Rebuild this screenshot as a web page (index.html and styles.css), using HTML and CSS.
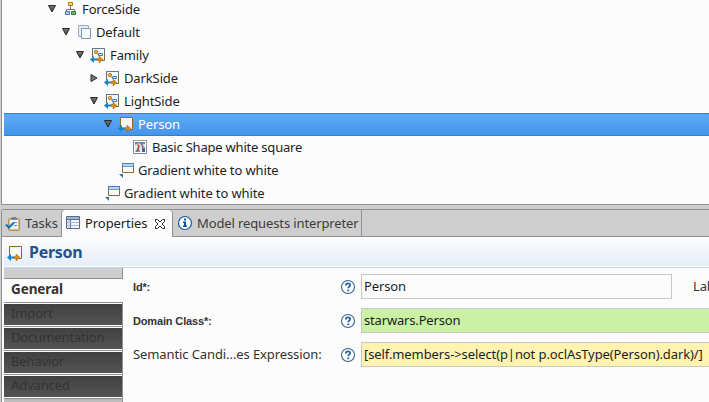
FILE: index.html
```html
<!DOCTYPE html>
<html lang="en">
<head>
<meta charset="utf-8">
<title>Properties</title>
<link rel="stylesheet" href="styles.css">
</head>
<body>
<svg class="defs" width="0" height="0">
  <defs>
    <linearGradient id="tri" x1="0" y1="0" x2="0" y2="1"><stop offset="0" stop-color="#777"/><stop offset="1" stop-color="#444"/></linearGradient>
    <symbol id="down" viewBox="0 0 12 12"><path d="M2.500 2.500h7L6 9z" fill="url(#tri)" stroke="#2b2b2b"/></symbol>
    <symbol id="right" viewBox="0 0 12 12"><path d="M3 2.500v7L9 6z" fill="#777" stroke="#2b2b2b"/></symbol>
    <symbol id="arrows" viewBox="0 0 16 16"><path d="M0 12.500l4-3.500v2.500h3v2H4V16z" fill="#1583c8"/><path d="M13 12.500L9 9v2.500H7v2h2V16z" fill="#d98a1c" stroke="#98600f" stroke-width=".5"/></symbol>
    <symbol id="container" viewBox="0 0 16 16"><path d="M2.500 10V1.500h12v12H12" fill="#f3f8fd" stroke="#846721"/><path d="M2.500 7V1.500h12v5" fill="none" stroke="#64748c"/><circle cx="6" cy="5" r="1.700" fill="#f2ac38" stroke="#b96b13" stroke-width=".8"/><path d="M7 6.500l2 2" stroke="#b96b13"/><path d="M8.500 6.500h4v2h-4z" fill="#e3f1ff" stroke="#3980bd"/><use href="#arrows"/></symbol>
    <symbol id="node" viewBox="0 0 16 16"><path d="M2.500 11V1.500h12v12H12" fill="#f3f6fa" stroke="#8a6b24"/><use href="#arrows"/></symbol>
    <symbol id="gradient" viewBox="0 0 16 16"><path d="M4.500 1.500h11v9h-11z" fill="#f8fbff" stroke="#8a6b24"/><path d="M4.500 6V1.500h11V6" fill="none" stroke="#4d79ad"/><path d="M5 2h10v2H5z" fill="#b8d5ef"/><path d="M5 4.500h10" stroke="#7099c8"/><path d="M1 12h4v4z" fill="#1b78b0"/></symbol>
    <symbol id="help" viewBox="0 0 16 16"><circle cx="8" cy="8" r="6.500" fill="#fff" stroke="#326594" stroke-width="1.100"/><path d="M5.900 6.600c0-3 4.300-2.800 4.300-.5 0 1.500-2 1.500-2 3.200" fill="none" stroke="#285f9a" stroke-width="1.800"/><path d="M7.300 10.500h1.900v1.700H7.300z" fill="#285f9a"/></symbol>
  </defs>
</svg>
<div class="workbench">
  <section class="tree">
    <div class="row d0"><svg class="twist"><use href="#down"/></svg><svg class="icon" viewBox="0 0 16 16"><path d="M8.500 5v4M4.500 11V8.500h8V11" fill="none" stroke="#71777b"/><path d="M6.500 1.500h4v3h-4z" fill="#ffd76b" stroke="#b27a0d"/><path d="M3.500 10.500h4v3h-4z" fill="#b7c9ef" stroke="#5372b3"/><path d="M9.500 10.500h4v3h-4z" fill="#78b967" stroke="#31792d"/></svg><span>ForceSide</span></div>
    <div class="row d1"><svg class="twist"><use href="#down"/></svg><svg class="icon" viewBox="0 0 16 16"><path d="M2.500 1.500h10v11h-10z" fill="#e6ecf4" stroke="#9aacc6"/><path d="M5.500 4.500h9v10h-9z" fill="#f5fafd" stroke="#7f96b8"/></svg><span>Default</span></div>
    <div class="row d2"><svg class="twist"><use href="#down"/></svg><svg class="icon"><use href="#container"/></svg><span>Family</span></div>
    <div class="row d3"><svg class="twist"><use href="#right"/></svg><svg class="icon"><use href="#container"/></svg><span>DarkSide</span></div>
    <div class="row d3"><svg class="twist"><use href="#down"/></svg><svg class="icon"><use href="#container"/></svg><span>LightSide</span></div>
    <div class="row d4 selected"><svg class="twist"><use href="#down"/></svg><svg class="icon"><use href="#node"/></svg><span>Person</span></div>
    <div class="row d5"><i class="twist"></i><svg class="icon" viewBox="0 0 16 16"><path d="M1.500 1.500h13v13h-13z" fill="#fff" stroke="#7b86a0"/><path d="M1.500 1.500h13v5" fill="none" stroke="#a5a284"/><path d="M3 3h10v10H3z" fill="#6689b5"/><path d="M3 6l4-2 2 2 4-1v3l-3 1v4H8l-1-4-4 4z" fill="#e7e9ee"/><path d="M5 4l3 3-2 5H4l2-4zM9 4l3 4-2 1z" fill="#b34e48"/><path d="M10 9l3 1v3h-3z" fill="#3d659a"/></svg><span class="tight">Basic Shape white square</span></div>
    <div class="row d4"><i class="twist"></i><svg class="icon"><use href="#gradient"/></svg><span>Gradient white to white</span></div>
    <div class="row d3"><i class="twist"></i><svg class="icon"><use href="#gradient"/></svg><span>Gradient white to white</span></div>
  </section>
  <section class="panel">
    <nav class="tabs">
      <div class="tab tasks"><svg class="icon" viewBox="0 0 16 16"><rect x="3.500" y="2.500" width="11" height="12" rx="1" fill="#d9ba80" stroke="#b89155"/><path d="M5 4h8v9H5z" fill="#edf5fc"/><path d="M6 3l1-2h4l1 2v1H6z" fill="#78828f"/><path d="M9 6.500h3M9 9.500h3" stroke="#6393c9"/><path d="M1 8.500l3 3 5-5" fill="none" stroke="#0875b8" stroke-width="2"/></svg><span>Tasks</span></div>
      <div class="tab active"><svg class="icon" viewBox="0 0 16 16"><path d="M1.500 1.500h13v12h-13z" fill="#f4f8fc" stroke="#5c6c88"/><path d="M2 2h12v2H2z" fill="#9fb5d4"/><path d="M2 4h4v9H2z" fill="#d3e1f1"/><path d="M2 4.500h12M5.500 4v9" stroke="#5c6c88"/><path d="M2 7.500h12M2 10.500h12" stroke="#a9bbd3"/></svg><span>Properties</span><svg class="close" viewBox="0 0 12 12"><path d="M1.500 1.500h2L6 4l2.500-2.500h2v2L8 6l2.500 2.500v2h-2L6 8l-2.500 2.500h-2v-2L4 6 1.500 3.500z" fill="#fff" stroke="#222"/></svg></div>
      <div class="tab requests"><svg class="icon" viewBox="0 0 16 16"><circle cx="8" cy="8" r="6.500" fill="#fff" stroke="#145a9d" stroke-width="1.200"/><path d="M7 3.500h2v2H7zM6 6.500h3v4h1V12H6v-1.500h1V8H6z" fill="#0d559d"/></svg><span>Model requests interpreter</span></div>
    </nav>
    <header class="heading"><svg class="icon"><use href="#node"/></svg><span>Person</span></header>
    <div class="content">
      <aside class="categories">
        <div class="cap"></div>
        <div class="general">General</div>
        <div class="category">Import</div>
        <div class="category">Documentation</div>
        <div class="category">Behavior</div>
        <div class="category">Advanced</div>
        <div class="foot"></div>
      </aside>
      <main class="form">
        <div class="field"><label class="required">Id*:</label><svg class="icon"><use href="#help"/></svg><div class="input id">Person</div><span class="next">Label:</span></div>
        <div class="field"><label class="required">Domain Class*:</label><svg class="icon"><use href="#help"/></svg><div class="input green">starwars.Person</div></div>
        <div class="field"><label>Semantic Candi...es Expression:</label><svg class="icon"><use href="#help"/></svg><div class="input yellow">[self.members-&gt;select(p|not p.oclAsType(Person).dark)/]</div></div>
      </main>
    </div>
  </section>
</div>
</body>
</html>
```
FILE: styles.css
```css
* { box-sizing: border-box; }
body { margin: 0; overflow: hidden; background: #cecece; font: 13px/23px "Noto Sans", sans-serif; letter-spacing: -0.12px; color: #1e1e1e; }
.defs { display: block; height: 0; }
.workbench { width: 709px; height: 402px; overflow: hidden; white-space: nowrap; }
svg { flex: none; }
.icon { width: 16px; height: 16px; flex: none; }
.tree { height: 205px; margin-left: 1px; padding-left: 2px; overflow: hidden; border-left: 1px solid #909090; border-bottom: 1px solid #909090; background: #fcfcfc; }
.row { display: flex; align-items: center; height: 23px; }
.row:first-child { margin-top: -2px; }
.twist { width: 12px; height: 12px; margin: 0 4px 1px 0; flex: none; }
.row .icon { margin: 0 4px 1px 0; }
.tight { letter-spacing: -0.21px; }
.d0 { padding-left: 42px; }
.d1 { padding-left: 56px; }
.d2 { padding-left: 70px; }
.d3 { padding-left: 84px; }
.d4 { padding-left: 98px; }
.d5 { padding-left: 112px; }
.selected { color: #fff; background: linear-gradient(#61aaf8, #4294ea); box-shadow: inset 0 1px #2d80d4, inset 0 -1px #2d80d4; }
.panel { height: 193px; margin: 4px 0 0 1px; border-left: 1px solid #909090; border-top: 1px solid #909090; border-top-left-radius: 3px; background: #fcfcfc; }
.tabs { display: flex; height: 27px; background: linear-gradient(#909090, #909090) bottom / 100% 1px no-repeat #cecece; color: #3c3c3c; }
.tab { display: flex; align-items: center; height: 27px; }
.tab .icon { margin: 0 4px 1px 0; }
.tasks { width: 59px; padding-left: 3px; letter-spacing: 0; }
.tasks .icon { margin-bottom: 0; }
.active { width: 112px; padding-left: 3px; background: #fcfcfc; border: solid #909090; border-width: 0 1px; border-radius: 4px 4px 0 0; color: #222; }
.active span { width: 62px; letter-spacing: -0.07px; }
.close { width: 12px; height: 12px; margin-left: 7px; }
.requests { width: 189px; padding-left: 4px; border-right: 1px solid #909090; }
.heading { display: flex; align-items: center; gap: 6px; height: 31px; margin-left: 2px; padding-left: 3px; border-bottom: 1px solid #bdd7f5; background: linear-gradient(#fcfcfc, #e5eef9 97%, #fcfcfc 97%); color: #25528a; font-size: 16px; font-weight: 700; letter-spacing: -0.3px; }
.heading .icon { margin-top: 2px; }
.heading span { margin-top: 1px; }
.content { display: flex; margin-left: 2px; }
.categories { flex: none; width: 119px; border-right: 1px solid #909090; }
.cap { height: 11px; background: #cecece; border-bottom: 1px solid #909090; }
.general { width: 119px; height: 23px; padding-left: 7px; background: #fcfcfc; color: #333; font-size: 13.500px; font-weight: 700; line-height: 21px; letter-spacing: -0.1px; }
.category { height: 24px; padding-left: 7px; border-top: 1px solid #909090; box-shadow: inset 0 1px #fcfcfc, inset 0 -1px #fcfcfc; background: linear-gradient(#404040, #555); color: #333; line-height: 20px; }
.foot { height: 8px; border-top: 1px solid #909090; background: linear-gradient(#b5b5b5, #d0d0d0); }
.form { flex: 1; min-width: 0; padding: 6px 0 0 10px; overflow: hidden; }
.field { display: flex; align-items: center; height: 25px; margin-bottom: 9px; }
.field label { flex: none; width: 207px; color: #333; letter-spacing: -0.1px; }
.field .required { font: bold 11px "Liberation Sans", sans-serif; letter-spacing: -0.15px; }
.input { flex: 1; height: 25px; margin-left: 5px; padding-left: 2px; border: 1px solid #c7c7c7; color: #1e1e1e; overflow: hidden; }
.input.id { flex: 0 0 311px; }
.green { background: #caf1a4; border-right: 0; letter-spacing: -0.17px; }
.yellow { background: #fff3b1; border-right: 0; letter-spacing: -0.1px; }
.next { flex: none; margin-left: 21px; color: #333; }
```
